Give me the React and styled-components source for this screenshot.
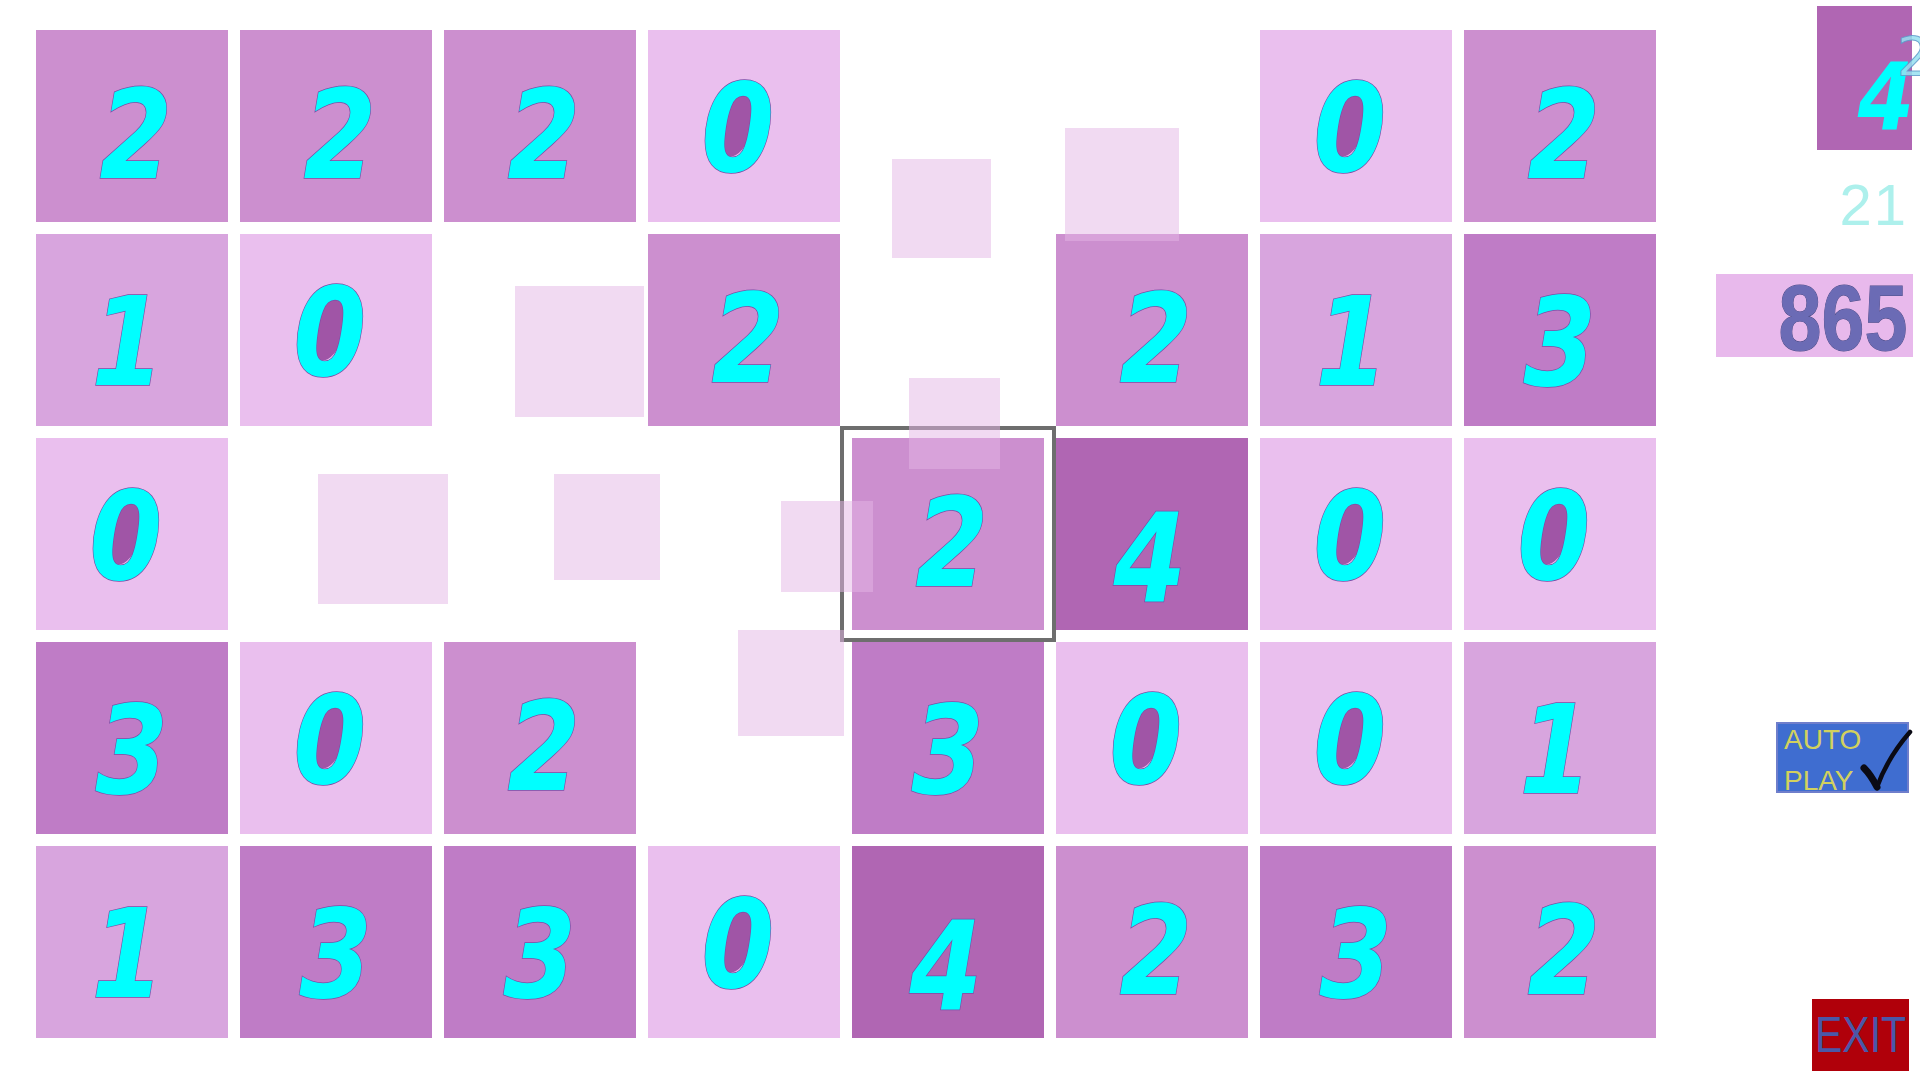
import React from "react";
import styled, { createGlobalStyle } from "styled-components";

const GlobalStyle = createGlobalStyle`
  html, body {
    margin: 0;
    padding: 0;
    background: #ffffff;
  }
  body {
    font-family: "DejaVu Sans", "Liberation Sans", sans-serif;
  }
`;

// board values, null = empty slot
const BOARD = [
  [2, 2, 2, 0, null, null, 0, 2],
  [1, 0, null, 2, null, 2, 1, 3],
  [0, null, null, null, 2, 4, 0, 0],
  [3, 0, 2, null, 3, 0, 0, 1],
  [1, 3, 3, 0, 4, 2, 3, 2],
];

const SELECTED = { row: 2, col: 4 };

const TILE_COLORS = ["#eabfee", "#d8a5de", "#cc8fcf", "#bf7cc6", "#b066b3"];

// each digit sprite sits a little differently inside its tile
const DIGIT_OFFSET = {
  0: { x: -6, y: 3 },
  1: { x: -4, y: 13 },
  2: { x: 4, y: 10 },
  3: { x: 0, y: 13 },
  4: { x: -2, y: 25 },
};

// fading tiles drifting over the board
const GHOSTS = [
  { x: 515, y: 286, w: 129, h: 131 },
  { x: 318, y: 474, w: 130, h: 130 },
  { x: 554, y: 474, w: 106, h: 106 },
  { x: 781, y: 501, w: 92, h: 91 },
  { x: 738, y: 630, w: 106, h: 106 },
  { x: 892, y: 159, w: 99, h: 99 },
  { x: 1065, y: 128, w: 114, h: 113 },
  { x: 909, y: 378, w: 91, h: 91 },
];

const App = () => {
  return (
    <>
      <GlobalStyle />
      <Screen>
        <Board>
          {BOARD.map((row, r) =>
            row.map((value, c) => {
              const selected = r === SELECTED.row && c === SELECTED.col;
              if (value === null) return <Slot key={`${r}-${c}`} />;
              return (
                <Tile key={`${r}-${c}`} $value={value} $selected={selected}>
                  {value === 0 && <Counter />}
                  <Digit $dx={DIGIT_OFFSET[value].x} $dy={DIGIT_OFFSET[value].y}>
                    {value}
                  </Digit>
                </Tile>
              );
            })
          )}
        </Board>

        <Sidebar>
          <NextTile>
            <NextDigit>4</NextDigit>
          </NextTile>
          <Moves>21</Moves>
          <ScoreBox>
            <ScoreText>865</ScoreText>
          </ScoreBox>
          <AutoPlay>
            <AutoLabel>
              AUTO
              <br />
              PLAY
            </AutoLabel>
            <Check viewBox="0 0 140 72" aria-hidden="true">
              <path d="M88 46 Q95 53 101 65" strokeWidth="7" />
              <path d="M101 65 Q112 35 134 10" strokeWidth="4.5" />
            </Check>
          </AutoPlay>
          <ExitButton>
            <ExitText>EXIT</ExitText>
          </ExitButton>
        </Sidebar>

        {GHOSTS.map((g, i) => (
          <Ghost
            key={i}
            style={{ left: g.x, top: g.y, width: g.w, height: g.h }}
          />
        ))}
        <PreviewTwo>2</PreviewTwo>
      </Screen>
    </>
  );
};

export default App;

const Screen = styled.div`
  position: relative;
  width: 1920px;
  height: 1080px;
  display: flex;
  overflow: hidden;
`;

const Board = styled.div`
  display: grid;
  grid-template-columns: repeat(8, 192px);
  grid-auto-rows: 192px;
  gap: 12px;
  padding: 30px 0 0 36px;
  align-content: start;
`;

const Slot = styled.div``;

const Tile = styled.div`
  position: relative;
  isolation: isolate;
  background: ${(p) => TILE_COLORS[p.$value]};
  display: flex;
  align-items: center;
  justify-content: center;

  ${(p) =>
    p.$selected &&
    `
    &::after {
      content: "";
      position: absolute;
      inset: -12px;
      border: 4px solid #6e6e6e;
      pointer-events: none;
    }
  `}
`;

const Digit = styled.span`
  position: relative;
  font-family: "DejaVu Sans", sans-serif;
  font-weight: bold;
  font-style: italic;
  font-size: 123px;
  line-height: 192px;
  color: #00ffff;
  -webkit-text-stroke: 1.5px #7a4ea6;
  paint-order: stroke fill;
  transform: translate(${(p) => p.$dx}px, ${(p) => p.$dy}px) scaleX(0.85);
`;

const Counter = styled.div`
  position: absolute;
  left: 89px;
  top: 96px;
  width: 30px;
  height: 62px;
  margin: -31px 0 0 -15px;
  border-radius: 50%;
  background: #a055a6;
  transform: rotate(14deg);
  z-index: -1;
`;

const Ghost = styled.div`
  position: absolute;
  background: rgba(228, 182, 230, 0.5);
  pointer-events: none;
`;

const Sidebar = styled.div`
  flex: 1;
  display: flex;
  flex-direction: column;
  align-items: flex-end;
  padding-right: 8px;
`;

const NextTile = styled.div`
  margin-top: 6px;
  width: 95px;
  height: 144px;
  background: #b066b3;
  display: flex;
  align-items: flex-start;
  justify-content: flex-end;
`;

const NextDigit = styled.span`
  font-family: "DejaVu Sans", sans-serif;
  font-weight: bold;
  font-style: italic;
  font-size: 92px;
  line-height: 92px;
  margin-top: 46px;
  margin-right: -2px;
  color: #00ffff;
  transform: scaleX(0.88);
  transform-origin: right center;
`;

const PreviewTwo = styled.span`
  position: absolute;
  left: 1897px;
  top: 30px;
  font-family: "DejaVu Sans", sans-serif;
  font-size: 54px;
  line-height: 54px;
  color: rgba(150, 225, 240, 0.85);
  -webkit-text-stroke: 1px rgba(90, 150, 200, 0.8);
  pointer-events: none;
`;

const Moves = styled.div`
  margin-top: 26px;
  margin-right: 4px;
  font-family: "Liberation Sans", sans-serif;
  font-size: 58px;
  line-height: 58px;
  letter-spacing: 2px;
  color: #adf0ec;
`;

const ScoreBox = styled.div`
  margin-top: 40px;
  margin-right: -1px;
  width: 197px;
  height: 83px;
  box-sizing: border-box;
  padding-right: 6px;
  background: #e8b9ec;
  display: flex;
  justify-content: flex-end;
`;

const ScoreText = styled.span`
  font-family: "Liberation Sans", sans-serif;
  font-weight: bold;
  font-size: 92px;
  line-height: 88px;
  color: #6b6bb5;
  -webkit-text-stroke: 1px #4b4b86;
  paint-order: stroke fill;
  transform: scaleX(0.84);
  transform-origin: right center;
`;

const AutoPlay = styled.div`
  position: relative;
  margin-top: 365px;
  margin-right: 3px;
  width: 133px;
  height: 71px;
  box-sizing: border-box;
  border: 2px solid #6f7ecb;
  background: #3f6dd0;
  padding-left: 6px;
`;

const AutoLabel = styled.div`
  margin-top: -5px;
  font-family: "Liberation Sans", sans-serif;
  font-size: 28px;
  line-height: 41px;
  color: #d2d15e;
`;

const Check = styled.svg`
  position: absolute;
  left: -2px;
  top: -2px;
  width: 140px;
  height: 72px;
  overflow: visible;
  fill: none;
  stroke: #0a0a14;
  stroke-linecap: round;
`;

const ExitButton = styled.div`
  margin-top: 206px;
  margin-right: 3px;
  width: 97px;
  height: 72px;
  background: #b0000a;
  display: flex;
  align-items: center;
  justify-content: center;
`;

const ExitText = styled.span`
  font-family: "Liberation Sans", sans-serif;
  font-size: 50px;
  line-height: 72px;
  color: #4a58a8;
  transform: scaleX(0.82);
`;
